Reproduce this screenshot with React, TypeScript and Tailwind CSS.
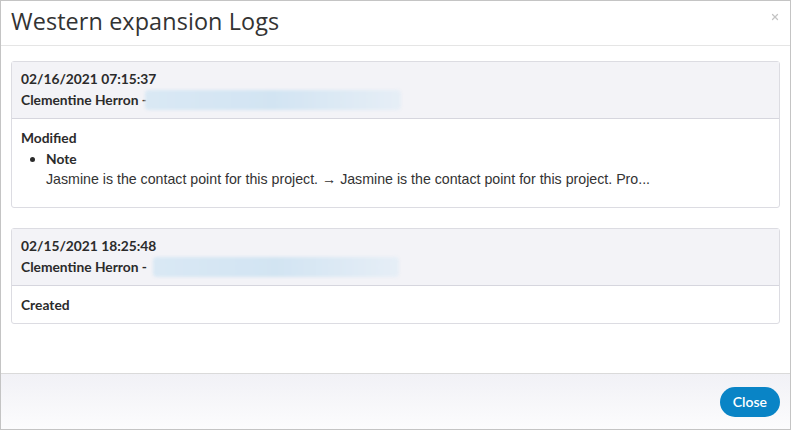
import { X } from "lucide-react";

type Log = {
    date: string;
    user: string;
    action: string;
    changes?: { field: string; text: string }[];
    blurOffset: number;
    blurWidth: number;
};

const logs: Log[] = [
    {
        date: "02/16/2021 07:15:37",
        user: "Clementine Herron",
        action: "Modified",
        changes: [
            {
                field: "Note",
                text: "Jasmine is the contact point for this project. \u2192 Jasmine is the contact point for this project. Pro...",
            },
        ],
        blurOffset: -2,
        blurWidth: 256,
    },
    {
        date: "02/15/2021 18:25:48",
        user: "Clementine Herron",
        action: "Created",
        blurOffset: 6,
        blurWidth: 246,
    },
];

function LogCard({ log }: { log: Log }) {
    return (
        <div className="border border-[#dcdce2] rounded-[3px] bg-white">
            <div className="bg-[#f3f3f7] border-b border-[#d6d6de] px-[9px] pt-[6px] pb-[8px] text-[13.8px] font-bold text-[#2b2b2b] leading-[21px]">
                <div>{log.date}</div>
                <div className="flex items-center">
                    <span>{log.user} -</span>
                    <span
                        className="h-[20px] rounded-sm bg-gradient-to-r from-[#d9e8f4] via-[#d2e4f2] to-[#e6eef6] blur-[1.5px]"
                        style={{ width: log.blurWidth, marginLeft: log.blurOffset }}
                    />
                </div>
            </div>
            <div className="px-[9px] pt-[8px] pb-[8px] text-[13.8px] text-[#2b2b2b] leading-[21px]">
                <div className="font-bold">{log.action}</div>
                {log.changes && (
                    <ul className="list-disc pl-[25px] pb-[9px]">
                        {log.changes.map((c) => (
                            <li key={c.field}>
                                <div className="font-bold">{c.field}</div>
                                <div className="font-['Liberation_Sans',Arial,sans-serif] text-[14.2px] text-[#333]">{c.text}</div>
                            </li>
                        ))}
                    </ul>
                )}
            </div>
        </div>
    );
}

export default function App() {
    return (
        <div className="w-[792px] h-[431px] bg-white font-['Lato',sans-serif]">
            <div className="w-[791px] h-[430px] border border-[#c4c4c4] flex flex-col bg-white">
                <div className="h-[45px] border-b border-[#e5e5e5] flex items-center justify-between pl-[10px] pr-[10px]">
                    <h1 className="text-[23.4px] text-[#333] font-['Open_Sans',sans-serif] tracking-[0.1px] leading-none -mt-[3px]">
                        Western expansion Logs
                    </h1>
                    <X className="w-[10px] h-[10px] text-[#c4c4c4] -mt-[12px]" strokeWidth={3} />
                </div>
                <div className="flex-1 px-[10px] pt-[15px] flex flex-col gap-[20px]">
                    {logs.map((l) => (
                        <LogCard key={l.date} log={l} />
                    ))}
                </div>
                <div className="h-[56px] border-t border-[#dadada] bg-gradient-to-b from-[#f1f1f6] to-[#fcfcfd] flex items-center justify-end pr-[10px]">
                    <button className="h-[30px] px-[13px] rounded-full bg-[#0984c6] text-white text-[14px] font-semibold">
                        Close
                    </button>
                </div>
            </div>
        </div>
    );
}
